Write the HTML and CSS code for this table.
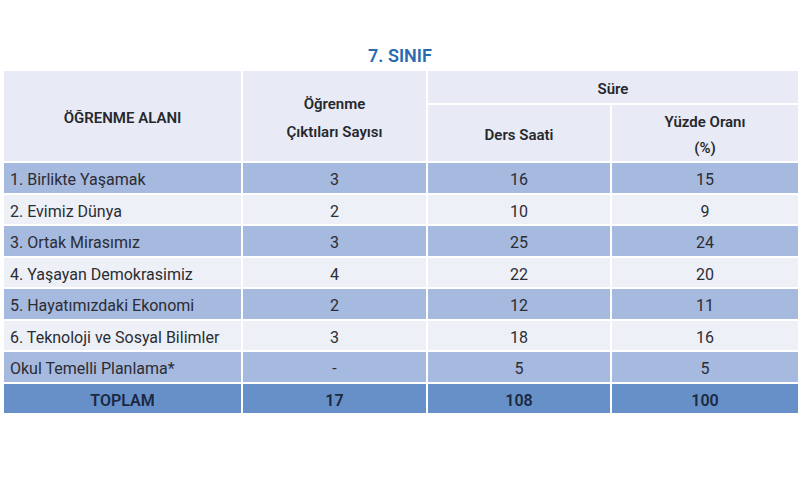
FILE: index.html
```html
<!DOCTYPE html>
<html lang="tr">
<head>
<meta charset="utf-8">
<link rel="stylesheet" href="styles.css">
</head>
<body>
<div class="page">
  <h1 class="title">7. SINIF</h1>
  <table class="grid">
    <colgroup>
      <col class="c1"><col class="c2"><col class="c3"><col class="c4">
    </colgroup>
    <thead>
      <tr class="h1row">
        <th rowspan="2">ÖĞRENME ALANI</th>
        <th rowspan="2" class="two">Öğrenme<br>Çıktıları Sayısı</th>
        <th colspan="2" class="sure">Süre</th>
      </tr>
      <tr class="h2row">
        <th class="two">Ders Saati</th>
        <th class="two">Yüzde Oranı<br>(%)</th>
      </tr>
    </thead>
    <tbody>
      <tr class="odd"><td class="name">1. Birlikte Yaşamak</td><td>3</td><td>16</td><td>15</td></tr>
      <tr class="even"><td class="name">2. Evimiz Dünya</td><td>2</td><td>10</td><td>9</td></tr>
      <tr class="odd"><td class="name">3. Ortak Mirasımız</td><td>3</td><td>25</td><td>24</td></tr>
      <tr class="even"><td class="name">4. Yaşayan Demokrasimiz</td><td>4</td><td>22</td><td>20</td></tr>
      <tr class="odd"><td class="name">5. Hayatımızdaki Ekonomi</td><td>2</td><td>12</td><td>11</td></tr>
      <tr class="even"><td class="name">6. Teknoloji ve Sosyal Bilimler</td><td>3</td><td>18</td><td>16</td></tr>
      <tr class="odd"><td class="name">Okul Temelli Planlama*</td><td>-</td><td>5</td><td>5</td></tr>
      <tr class="total"><td>TOPLAM</td><td>17</td><td>108</td><td>100</td></tr>
    </tbody>
  </table>
</div>
</body>
</html>
```

FILE: styles.css
```css
html, body {
  margin: 0;
  padding: 0;
  background: #ffffff;
}

body {
  font-family: Roboto, "Liberation Sans", sans-serif;
  color: #2b2d33;
}

.page {
  padding: 44px 2px 0 2px;
}

.title {
  margin: 0 0 2px 0;
  height: 23px;
  line-height: 23px;
  text-align: center;
  font-size: 18px;
  font-weight: 600;
  color: #2a6bb0;
}

.grid {
  width: 796px;
  border-collapse: collapse;
  table-layout: fixed;
  font-size: 16px;
}

.c1 { width: 239px; }
.c2 { width: 185px; }
.c3 { width: 184px; }
.c4 { width: 188px; }

.grid th,
.grid td {
  border: 2px solid #ffffff;
  padding: 0;
  text-align: center;
  vertical-align: middle;
}

.grid th {
  background: #e8ebf6;
  font-size: 15px;
  font-weight: 600;
  color: #26282d;
  line-height: 28px;
  padding-top: 4px;
}

.h1row th { height: 26px; }
.h2row th { height: 52px; line-height: 26px; }

.grid td {
  height: 24.5px;
  line-height: 24px;
  padding-top: 5px;
}

.grid td.name {
  text-align: left;
  padding-left: 6px;
  white-space: nowrap;
}

.odd td { background: #a6b9df; }
.even td { background: #eef0f8; }

.total td {
  background: #6690c7;
  font-weight: 600;
  color: #1c2842;
}
```
